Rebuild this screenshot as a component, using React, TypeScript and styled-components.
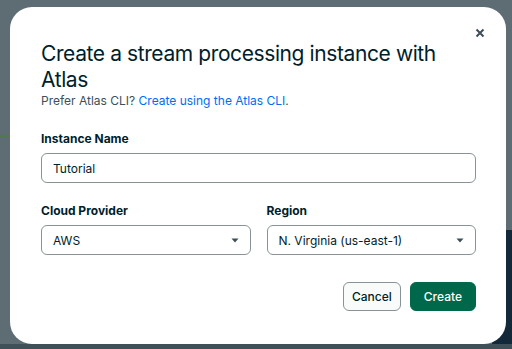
import React from 'react';
import styled, { createGlobalStyle } from 'styled-components';

const GlobalStyle = createGlobalStyle`
  html, body {
    margin: 0;
    padding: 0;
    background: #5e6d74;
    font-family: Inter, "Noto Sans", "Liberation Sans", sans-serif;
  }
  * {
    box-sizing: border-box;
  }
`;

const Backdrop = styled.div`
  position: relative;
  width: 512px;
  height: 349px;
  overflow: hidden;
  background: #5e6d74;
  padding: 7px 6px 5px 10px;
  display: flex;
`;

const BackgroundPanel = styled.div`
  position: absolute;
  right: 0;
  top: 230px;
  width: 20px;
  bottom: 0;
  background: #13293a;
`;

const BottomStrip = styled.div`
  position: absolute;
  left: 0;
  right: 0;
  bottom: 0;
  height: 5px;
  background: #3f5058;
`;

const GreenTick = styled.div`
  position: absolute;
  left: 0;
  top: 135px;
  width: 10px;
  height: 2px;
  background: #4f7a4a;
`;

const Modal = styled.div`
  position: relative;
  z-index: 1;
  flex: 1;
  background: #ffffff;
  border-radius: 22px;
  padding: 34px 30px 0 31px;
  display: flex;
  flex-direction: column;
`;

const CloseButton = styled.button`
  position: absolute;
  top: 17px;
  right: 17px;
  width: 18px;
  height: 18px;
  padding: 0;
  border: none;
  background: none;
  display: flex;
  align-items: center;
  justify-content: center;
  cursor: pointer;
`;

const Title = styled.h1`
  margin: 0;
  font-size: 21px;
  line-height: 26px;
  font-weight: 400;
  letter-spacing: -0.4px;
  color: #001e2b;
`;

const Subtitle = styled.p`
  margin: 0;
  font-size: 12px;
  line-height: 16px;
  color: #3d4f58;
`;

const Link = styled.a`
  color: #016bf8;
  text-decoration: none;
`;

const Field = styled.div`
  display: flex;
  flex-direction: column;
  gap: 6px;
  flex: 1;
`;

const Row = styled.div<{ $top: number }>`
  display: flex;
  gap: 16px;
  margin-top: ${(p) => p.$top}px;
`;

const Label = styled.label`
  font-size: 12px;
  line-height: 16px;
  font-weight: 700;
  color: #001e2b;
`;

const InputBox = styled.div`
  height: 30px;
  border: 1px solid #889397;
  border-radius: 6px;
  padding: 0 11px;
  display: flex;
  align-items: center;
  justify-content: space-between;
  font-size: 12px;
  color: #001e2b;
  background: #ffffff;
`;

const Footer = styled.div`
  display: flex;
  justify-content: flex-end;
  gap: 9px;
  margin-top: 27px;
`;

const Button = styled.button<{ $primary?: boolean }>`
  height: 29px;
  padding: 0 ${(p) => (p.$primary ? 13 : 8)}px;
  border-radius: 6px;
  font-family: inherit;
  font-size: 12px;
  font-weight: 500;
  border: 1px solid ${(p) => (p.$primary ? '#00684a' : '#889397')};
  background: ${(p) => (p.$primary ? '#00684a' : '#f9fbfa')};
  color: ${(p) => (p.$primary ? '#ffffff' : '#001e2b')};
  cursor: pointer;
`;

function Caret() {
  return (
    <svg width="8" height="5" viewBox="0 0 8 5">
      <path d="M0.5 0.5 L7.5 0.5 L4 4.5 Z" fill="#3d4f58" />
    </svg>
  );
}

function Select(props: { value: string }) {
  return (
    <InputBox>
      <span>{props.value}</span>
      <Caret />
    </InputBox>
  );
}

const App = () => {
  return (
    <>
      <GlobalStyle />
      <Backdrop>
        <GreenTick />
        <BackgroundPanel />
        <BottomStrip />
        <Modal>
          <CloseButton aria-label="Close">
            <svg width="10" height="10" viewBox="0 0 10 10">
              <path d="M1.5 1.5 L8.5 8.5 M8.5 1.5 L1.5 8.5" stroke="#3d4f58" strokeWidth="2" />
            </svg>
          </CloseButton>
          <Title>Create a stream processing instance with Atlas</Title>
          <Subtitle>
            Prefer Atlas CLI? <Link href="#">Create using the Atlas CLI</Link>.
          </Subtitle>
          <Row $top={22}>
            <Field>
              <Label>Instance Name</Label>
              <InputBox>Tutorial</InputBox>
            </Field>
          </Row>
          <Row $top={20}>
            <Field>
              <Label>Cloud Provider</Label>
              <Select value="AWS" />
            </Field>
            <Field>
              <Label>Region</Label>
              <Select value="N. Virginia (us-east-1)" />
            </Field>
          </Row>
          <Footer>
            <Button>Cancel</Button>
            <Button $primary>Create</Button>
          </Footer>
        </Modal>
      </Backdrop>
    </>
  );
};

export default App;
